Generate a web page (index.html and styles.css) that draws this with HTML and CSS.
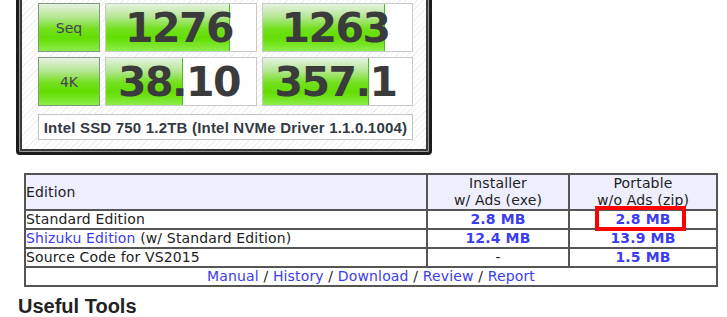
FILE: index.html
```html
<!DOCTYPE html>
<html>
<head>
<meta charset="utf-8">
<link rel="stylesheet" href="styles.css">
</head>
<body>
<div class="cdm">
  <div class="label">Seq</div>
  <div class="val"><div class="fill" style="width:124px"></div><span class="num">1276</span></div>
  <div class="val"><div class="fill" style="width:122px"></div><span class="num">1263</span></div>
  <div class="label">4K</div>
  <div class="val"><div class="fill" style="width:77px"></div><span class="num">38.10</span></div>
  <div class="val"><div class="fill" style="width:106px"></div><span class="num">357.1</span></div>
  <div class="comment">Intel SSD 750 1.2TB (Intel NVMe Driver 1.1.0.1004)</div>
</div>

<table class="dl">
  <colgroup><col class="c1"><col class="c2"><col class="c3"></colgroup>
  <tr class="head">
    <th class="left">Edition</th>
    <th>Installer<br>w/ Ads (exe)</th>
    <th>Portable<br>w/o Ads (zip)</th>
  </tr>
  <tr>
    <td class="left">Standard Edition</td>
    <td><a class="size" href="#">2.8 MB</a></td>
    <td><a class="size mark" href="#">2.8 MB</a></td>
  </tr>
  <tr>
    <td class="left"><a href="#">Shizuku Edition</a> (w/ Standard Edition)</td>
    <td><a class="size" href="#">12.4 MB</a></td>
    <td><a class="size" href="#">13.9 MB</a></td>
  </tr>
  <tr>
    <td class="left">Source Code for VS2015</td>
    <td>-</td>
    <td><a class="size" href="#">1.5 MB</a></td>
  </tr>
  <tr>
    <td colspan="3" class="links"><a href="#">Manual</a> / <a href="#">History</a> / <a href="#">Download</a> / <a href="#">Review</a> / <a href="#">Report</a></td>
  </tr>
</table>

<h2 class="title">Useful Tools</h2>
</body>
</html>
```
FILE: styles.css
```css
html, body {
  margin: 0;
  padding: 0;
  background: #ffffff;
}

body {
  font-family: "DejaVu Sans", Verdana, sans-serif;
  color: #222;
  height: 317px;
  overflow: hidden;
}

.cdm {
  box-sizing: border-box;
  width: 416px;
  margin: -20px 0 0 16px;
  padding: 20px 16px 12px 19px;
  border: 3px solid #1c1c1c;
  border-radius: 0 0 4px 4px;
  box-shadow: inset 0 0 0 1px #9a9a9a, inset 0 0 0 3px #3a3a3a;
  background: repeating-linear-gradient(-45deg, #ffffff 0 3px, #f1f1f1 3px 4px);
  display: grid;
  grid-template-columns: 62px 152px 151px;
  grid-template-rows: 49px 49px 29px;
  column-gap: 5px;
  row-gap: 5px;
}

.label {
  box-sizing: border-box;
  border: 1px solid #7f9a7f;
  background: linear-gradient(to bottom, #e6f2e2 0%, #b4e692 28%, #74e020 52%, #62de00 72%, #8cec48 100%);
  display: flex;
  align-items: center;
  justify-content: center;
  font-family: "Comic Sans MS", "DejaVu Sans", sans-serif;
  font-size: 14px;
  color: #4a3f5a;
}

.val {
  box-sizing: border-box;
  position: relative;
  border: 1px solid #c9c9c9;
  background: #ffffff;
  display: flex;
  align-items: center;
  justify-content: center;
  overflow: hidden;
}

.fill {
  position: absolute;
  left: 0;
  top: 0;
  bottom: 0;
  box-sizing: border-box;
  border-right: 1px solid #4cbc2a;
  background: linear-gradient(to bottom, #e6f2e2 0%, #b4e692 28%, #74e020 52%, #62de00 72%, #8cec48 100%);
}

.num {
  position: relative;
  font-family: "DejaVu Sans", Verdana, sans-serif;
  font-weight: bold;
  font-size: 41px;
  letter-spacing: -1.5px;
  line-height: 47px;
  color: #3b3b3b;
  padding-right: 4px;
  top: 1px;
}

.comment {
  grid-column: 1 / 4;
  margin-top: 3px;
  box-sizing: border-box;
  border: 1px solid #c4c4c4;
  background: #ffffff;
  font-family: "Liberation Sans", Arial, sans-serif;
  font-weight: bold;
  font-size: 15px;
  letter-spacing: 0.2px;
  color: #333a44;
  display: flex;
  align-items: center;
  justify-content: center;
}

.dl {
  margin: 18px 0 0 24px;
  width: 694px;
  table-layout: fixed;
  border-collapse: separate;
  border-spacing: 0;
  border: 1px solid #555;
  font-size: 14px;
  line-height: 17px;
  letter-spacing: 0.15px;
}

.c2 { width: 142px; }
.c3 { width: 148px; }

.dl th, .dl td {
  border: 1px solid #555;
  padding: 0;
  text-align: center;
  vertical-align: middle;
  font-weight: normal;
  color: #222;
  white-space: nowrap;
}

.dl .left {
  text-align: left;
}

.head th {
  background: #eeeeff;
}

.dl a {
  color: #3c3cf0;
  text-decoration: none;
}

.dl a.size {
  font-weight: bold;
}

.mark {
  position: relative;
  display: inline-block;
}

.mark::after {
  content: "";
  position: absolute;
  top: -5px;
  bottom: -3px;
  left: -20px;
  right: -15px;
  border: 4px solid #ff0000;
}

.links {
  color: #333;
}

.title {
  margin: 7px 0 0 18px;
  font-family: "Liberation Sans", Arial, sans-serif;
  font-weight: bold;
  font-size: 20px;
  line-height: 24px;
  color: #222;
}
```
